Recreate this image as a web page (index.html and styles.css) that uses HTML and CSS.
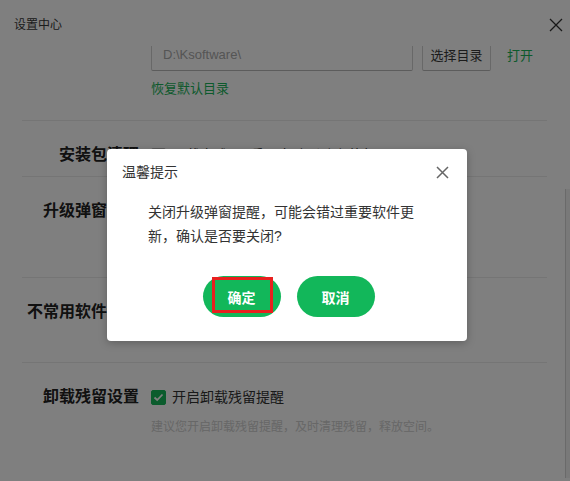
FILE: index.html
```html
<!DOCTYPE html>
<html lang="zh-CN">
<head>
    <meta charset="UTF-8">
    <meta name="viewport" content="width=device-width, initial-scale=1.0">
    <title>设置中心</title>
    <link rel="stylesheet" href="styles.css?v=6">
</head>
<body>
    <div class="window">
        <div class="header">
            <span class="header-title">设置中心</span>
            <span class="header-close">
                <svg width="14" height="14" viewBox="0 0 14 14"><path d="M1 1L13 13M13 1L1 13" stroke="#333" stroke-width="1.3" fill="none"/></svg>
            </span>
        </div>
        <div class="body">
            <div class="main">
                <div class="section section-dir">
                    <div class="label"></div>
                    <div class="content">
                        <div class="dir-row">
                            <div class="dir-input">D:\Ksoftware\</div>
                            <button class="dir-button">选择目录</button>
                            <a class="link">打开</a>
                        </div>
                        <a class="link reset-link">恢复默认目录</a>
                    </div>
                </div>
                <div class="section section-clean">
                    <div class="label">安装包清理</div>
                    <div class="content">
                        <label class="check-row"><span class="checkbox"></span>下载完成7天后，自动删除安装包</label>
                    </div>
                </div>
                <div class="section section-update">
                    <div class="label">升级弹窗提醒</div>
                    <div class="content"></div>
                </div>
                <div class="section section-unused">
                    <div class="label">不常用软件清理</div>
                    <div class="content"></div>
                </div>
                <div class="section section-residue">
                    <div class="label">卸载残留设置</div>
                    <div class="content">
                        <label class="check-row"><span class="checkbox checked">
                            <svg width="11" height="9" viewBox="0 0 11 9"><path d="M1.5 4.5L4.2 7L9.5 1.5" stroke="#fff" stroke-width="1.8" fill="none"/></svg>
                        </span>开启卸载残留提醒</label>
                        <div class="hint">建议您开启卸载残留提醒，及时清理残留，释放空间。</div>
                    </div>
                </div>
            </div>
            <div class="scrollbar"><div class="thumb"></div></div>
        </div>
    </div>

    <div class="backdrop"></div>

    <div class="modal">
        <div class="dialog">
            <div class="dialog-header">
                <span class="dialog-title">温馨提示</span>
                <span class="dialog-close">
                    <svg width="13" height="13" viewBox="0 0 13 13"><path d="M1 1L12 12M12 1L1 12" stroke="#666" stroke-width="1.5" fill="none"/></svg>
                </span>
            </div>
            <div class="dialog-text">关闭升级弹窗提醒，可能会错过重要软件更新，确认是否要关闭?</div>
            <div class="dialog-buttons">
                <button class="btn btn-focus">确定</button>
                <button class="btn">取消</button>
            </div>
        </div>
    </div>
</body>
</html>
```

FILE: styles.css
```css
body {
    margin: 0;
    width: 570px;
    height: 481px;
    overflow: hidden;
    background-color: #fff;
    font-family: "Liberation Sans", "Noto Sans CJK SC", sans-serif;
    color: #333;
    position: relative;
}
.window {
    height: 481px;
    display: flex;
    flex-direction: column;
    background-color: #fff;
}
.header {
    height: 46px;
    display: flex;
    justify-content: space-between;
    align-items: flex-start;
    padding: 17px 7px 0 14px;
    box-sizing: border-box;
    background-color: #fff;
    position: relative;
    z-index: 1;
}
.header-title {
    font-size: 12px;
    line-height: 16px;
    color: #383838;
}
.header-close {
    display: flex;
    margin-top: 1px;
}
.body {
    flex: 1;
    display: flex;
    overflow: hidden;
}
.main {
    flex: 1;
    padding: 0 18px 0 22px;
}
.scrollbar {
    width: 5px;
}
.thumb {
    margin-top: 143px;
    height: 289px;
    background-color: #f3f3f3;
    border-left: 1px solid #d4d4d4;
}
.section {
    display: grid;
    grid-template-columns: 117px 1fr;
    column-gap: 12px;
    border-bottom: 1px solid #eaeaea;
    padding-top: 24px;
}
.label {
    text-align: right;
    font-size: 16px;
    font-weight: bold;
    line-height: 20px;
    color: #222;
    white-space: nowrap;
}
.section-dir {
    margin-top: -8px;
    padding-top: 0;
    padding-bottom: 22px;
}
.dir-row {
    display: flex;
    align-items: center;
}
.dir-input {
    width: 262px;
    height: 33px;
    box-sizing: border-box;
    border: 1px solid #d0d0d0;
    border-bottom-color: #b8b8b8;
    border-radius: 2px;
    padding: 0 11px;
    font-size: 13px;
    line-height: 31px;
    color: #aaa;
}
.dir-button {
    margin-left: 9px;
    width: 69px;
    height: 33px;
    border: 1px solid #d0d0d0;
    border-bottom-color: #b8b8b8;
    border-radius: 2px;
    background: #fff;
    font-family: inherit;
    font-size: 13px;
    color: #383838;
    padding: 0;
}
.link {
    color: #1ab45a;
    font-size: 13px;
}
.dir-row .link {
    margin-left: 16px;
}
.reset-link {
    display: block;
    margin-top: 9px;
    line-height: 18px;
}
.section-clean {
    padding-bottom: 11px;
}
.section-update {
    padding-bottom: 56px;
}
.section-unused {
    padding-bottom: 40px;
}
.section-residue {
    border-bottom: none;
}
.check-row {
    display: flex;
    align-items: center;
    font-size: 14px;
    line-height: 20px;
    color: #333;
}
.checkbox {
    width: 13px;
    height: 13px;
    border: 1px solid #bbb;
    border-radius: 2px;
    margin-right: 6px;
    display: flex;
    align-items: center;
    justify-content: center;
}
.checkbox.checked {
    background-color: #16b85a;
    border-color: #16b85a;
}
.hint {
    margin-top: 11px;
    font-size: 12px;
    line-height: 18px;
    color: #cecece;
}
.backdrop {
    position: absolute;
    top: 0;
    left: 0;
    width: 570px;
    height: 481px;
    z-index: 5;
    background-color: #000;
    opacity: 0.5;
}
.modal {
    position: absolute;
    top: 0;
    left: 0;
    width: 570px;
    height: 481px;
    z-index: 10;
    display: flex;
    align-items: flex-start;
    padding: 149px 0 0 107px;
    box-sizing: border-box;
}
.dialog {
    width: 360px;
    height: 192px;
    background-color: #fff;
    border-radius: 4px;
    box-shadow: 0 2px 8px rgba(0, 0, 0, 0.25);
    box-sizing: border-box;
}
.dialog-header {
    display: flex;
    justify-content: space-between;
    align-items: center;
    padding: 14px 18px 0 15px;
    height: 18px;
    box-sizing: content-box;
}
.dialog-title {
    font-size: 14px;
    line-height: 18px;
    color: #333;
}
.dialog-close {
    display: flex;
}
.dialog-text {
    margin: 19px 0 0 41px;
    width: 270px;
    font-size: 14px;
    line-height: 24px;
    color: #333;
}
.dialog-buttons {
    display: flex;
    justify-content: center;
    gap: 16px;
    margin-top: 28px;
    padding-left: 3px;
}
.btn {
    position: relative;
    width: 78px;
    height: 41px;
    border: none;
    border-radius: 21px;
    background-color: #12b75a;
    color: #fff;
    font-family: inherit;
    font-size: 14px;
    font-weight: bold;
    padding: 0;
}
.btn-focus::after {
    content: "";
    position: absolute;
    left: 9px;
    top: 1px;
    width: 61px;
    height: 36px;
    box-sizing: border-box;
    border: 3px solid #e8201f;
}
```
